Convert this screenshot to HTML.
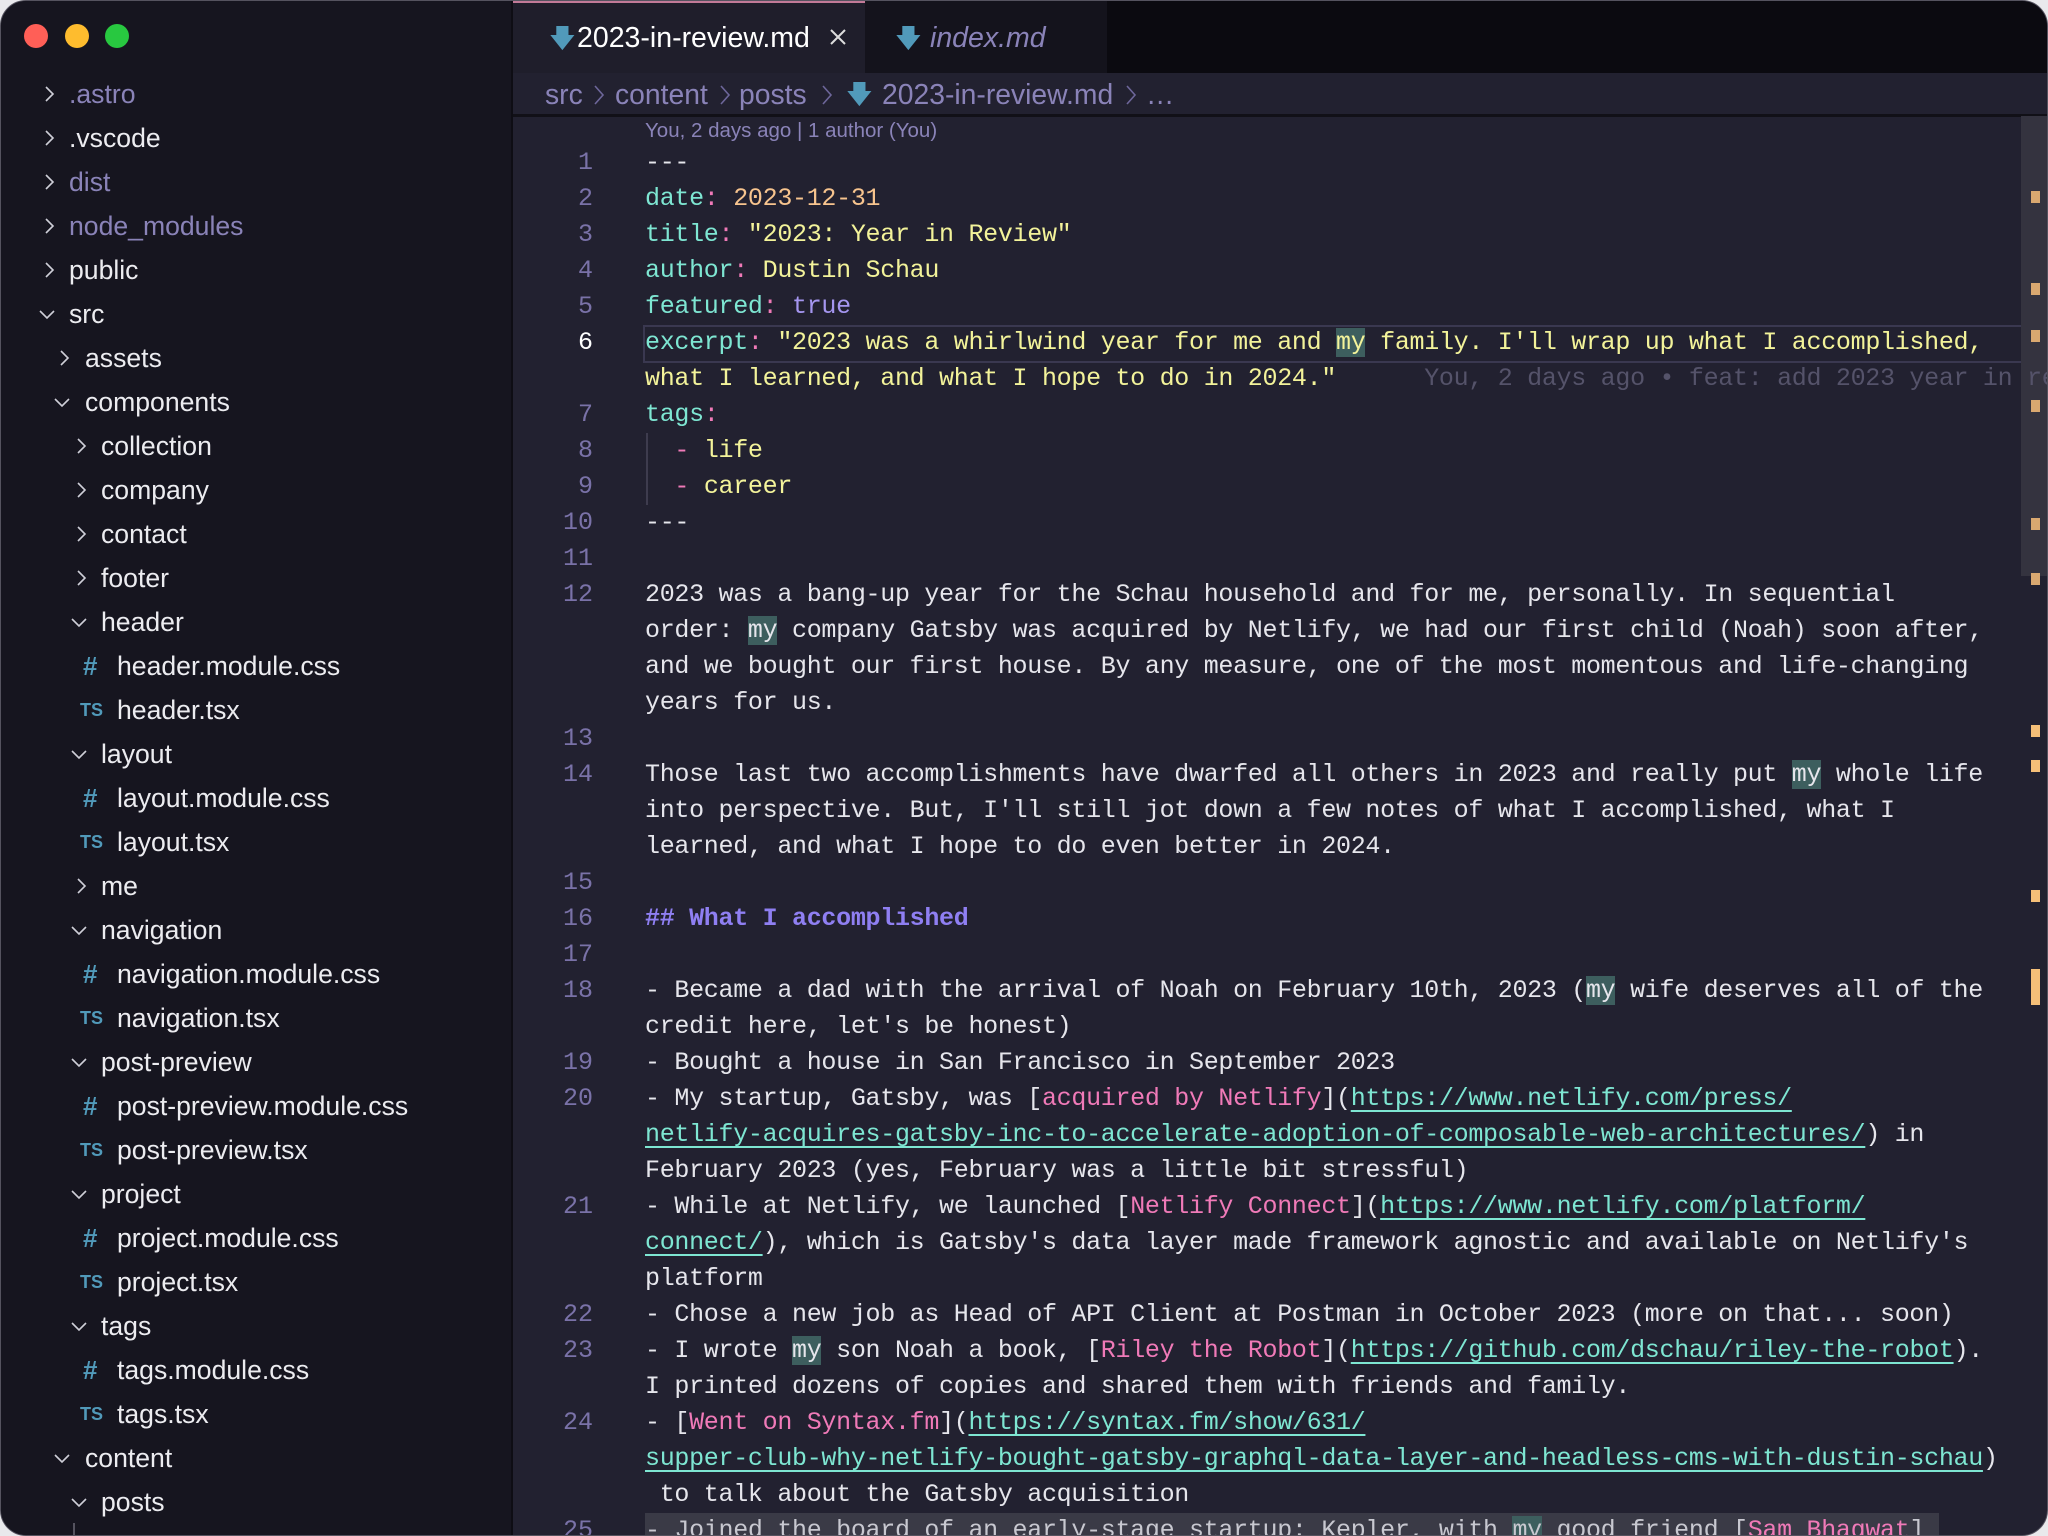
<!DOCTYPE html>
<html><head><meta charset="utf-8"><style>
*{margin:0;padding:0;box-sizing:border-box}
html,body{width:2048px;height:1536px;overflow:hidden;background:#e9e9ec}
#win{position:absolute;left:0;top:0;width:2048px;height:1536px;border-radius:26px;overflow:hidden;background:#222130;border:1px solid #55535f}
#side{position:absolute;left:0;top:0;width:512px;height:1536px;background:#16151f;border-right:2px solid #0e0d14;font-family:"Liberation Sans",sans-serif;font-size:26.6px;color:#ececf0}
.dot{position:absolute;top:23px;width:24px;height:24px;border-radius:50%}
.row{position:absolute;height:44px;line-height:44px;white-space:nowrap}
.chev{position:absolute;top:12px;width:20px;height:20px}
.dim{color:#8a83b8}
.hash{position:absolute;color:#519aba;font-weight:bold;font-size:26px}
.ts{position:absolute;color:#519aba;font-weight:bold;font-size:18px}
#tabs{position:absolute;left:512px;top:0;right:0;height:72px;background:#0b0a10}
.tab{position:absolute;top:0;height:72px;font-family:"Liberation Sans",sans-serif;font-size:28.5px;line-height:74px;white-space:nowrap}
#bc{position:absolute;left:512px;top:72px;right:0;height:44px;background:#222130;border-bottom:3px solid #111017;font-family:"Liberation Sans",sans-serif;font-size:28.3px;color:#8a83b8;line-height:42px;white-space:nowrap}
#bc span{position:absolute;top:0}
#bc svg{position:absolute;top:10px}
#code{position:absolute;left:512px;top:117px;right:0;bottom:0;font-family:"Liberation Mono",monospace;font-size:25px;letter-spacing:-0.3px;color:#e6e6ec}
.l{position:absolute;left:132px;height:36px;line-height:36px;white-space:pre}
.n{position:absolute;width:80px;left:0;text-align:right;height:36px;line-height:36px;color:#7a72a8;letter-spacing:0}
.k{color:#7ee6d2}.p{color:#f07ab8}.y{color:#f3f39a}.o{color:#f7c48e}.t{color:#a596f0}
.h{color:#8f7ff2;font-weight:bold}.lk{color:#f07ab8}.u{color:#7ee6d2;text-decoration:underline;text-decoration-thickness:2px;text-underline-offset:5px}
.m{background:#3d5e5e}
.mk{position:absolute;left:2030px;width:9px;height:12px;background:#d9a870}
</style></head><body><div id="win">
<div id="side">
<div class="dot" style="left:23px;background:#ff5f57"></div>
<div class="dot" style="left:64px;background:#febc2e"></div>
<div class="dot" style="left:104px;background:#28c840"></div>
<div class="row" style="top:71px;left:0"><svg class="chev" style="left:38px" viewBox="0 0 20 20"><polyline points="7,3 14,10 7,17" fill="none" stroke="#cfcfd8" stroke-width="1.6"/></svg><span class="dim" style="position:absolute;left:68px">.astro</span></div>
<div class="row" style="top:115px"><svg class="chev" style="left:38px" viewBox="0 0 20 20"><polyline points="7,3 14,10 7,17" fill="none" stroke="#cfcfd8" stroke-width="1.6"/></svg><span style="position:absolute;left:68px">.vscode</span></div>
<div class="row" style="top:159px"><svg class="chev" style="left:38px" viewBox="0 0 20 20"><polyline points="7,3 14,10 7,17" fill="none" stroke="#cfcfd8" stroke-width="1.6"/></svg><span class="dim" style="position:absolute;left:68px">dist</span></div>
<div class="row" style="top:203px"><svg class="chev" style="left:38px" viewBox="0 0 20 20"><polyline points="7,3 14,10 7,17" fill="none" stroke="#cfcfd8" stroke-width="1.6"/></svg><span class="dim" style="position:absolute;left:68px">node_modules</span></div>
<div class="row" style="top:247px"><svg class="chev" style="left:38px" viewBox="0 0 20 20"><polyline points="7,3 14,10 7,17" fill="none" stroke="#cfcfd8" stroke-width="1.6"/></svg><span style="position:absolute;left:68px">public</span></div>
<div class="row" style="top:291px"><svg class="chev" style="left:36px" viewBox="0 0 20 20"><polyline points="3,7 10,14 17,7" fill="none" stroke="#cfcfd8" stroke-width="1.6"/></svg><span style="position:absolute;left:68px">src</span></div>
<div class="row" style="top:335px"><svg class="chev" style="left:53px" viewBox="0 0 20 20"><polyline points="7,3 14,10 7,17" fill="none" stroke="#cfcfd8" stroke-width="1.6"/></svg><span style="position:absolute;left:84px">assets</span></div>
<div class="row" style="top:379px"><svg class="chev" style="left:51px" viewBox="0 0 20 20"><polyline points="3,7 10,14 17,7" fill="none" stroke="#cfcfd8" stroke-width="1.6"/></svg><span style="position:absolute;left:84px">components</span></div>
<div class="row" style="top:423px"><svg class="chev" style="left:70px" viewBox="0 0 20 20"><polyline points="7,3 14,10 7,17" fill="none" stroke="#cfcfd8" stroke-width="1.6"/></svg><span style="position:absolute;left:100px">collection</span></div>
<div class="row" style="top:467px"><svg class="chev" style="left:70px" viewBox="0 0 20 20"><polyline points="7,3 14,10 7,17" fill="none" stroke="#cfcfd8" stroke-width="1.6"/></svg><span style="position:absolute;left:100px">company</span></div>
<div class="row" style="top:511px"><svg class="chev" style="left:70px" viewBox="0 0 20 20"><polyline points="7,3 14,10 7,17" fill="none" stroke="#cfcfd8" stroke-width="1.6"/></svg><span style="position:absolute;left:100px">contact</span></div>
<div class="row" style="top:555px"><svg class="chev" style="left:70px" viewBox="0 0 20 20"><polyline points="7,3 14,10 7,17" fill="none" stroke="#cfcfd8" stroke-width="1.6"/></svg><span style="position:absolute;left:100px">footer</span></div>
<div class="row" style="top:599px"><svg class="chev" style="left:68px" viewBox="0 0 20 20"><polyline points="3,7 10,14 17,7" fill="none" stroke="#cfcfd8" stroke-width="1.6"/></svg><span style="position:absolute;left:100px">header</span></div>
<div class="row" style="top:643px"><span class="hash" style="left:82px">#</span><span style="position:absolute;left:116px">header.module.css</span></div>
<div class="row" style="top:687px"><span class="ts" style="left:79px">TS</span><span style="position:absolute;left:116px">header.tsx</span></div>
<div class="row" style="top:731px"><svg class="chev" style="left:68px" viewBox="0 0 20 20"><polyline points="3,7 10,14 17,7" fill="none" stroke="#cfcfd8" stroke-width="1.6"/></svg><span style="position:absolute;left:100px">layout</span></div>
<div class="row" style="top:775px"><span class="hash" style="left:82px">#</span><span style="position:absolute;left:116px">layout.module.css</span></div>
<div class="row" style="top:819px"><span class="ts" style="left:79px">TS</span><span style="position:absolute;left:116px">layout.tsx</span></div>
<div class="row" style="top:863px"><svg class="chev" style="left:70px" viewBox="0 0 20 20"><polyline points="7,3 14,10 7,17" fill="none" stroke="#cfcfd8" stroke-width="1.6"/></svg><span style="position:absolute;left:100px">me</span></div>
<div class="row" style="top:907px"><svg class="chev" style="left:68px" viewBox="0 0 20 20"><polyline points="3,7 10,14 17,7" fill="none" stroke="#cfcfd8" stroke-width="1.6"/></svg><span style="position:absolute;left:100px">navigation</span></div>
<div class="row" style="top:951px"><span class="hash" style="left:82px">#</span><span style="position:absolute;left:116px">navigation.module.css</span></div>
<div class="row" style="top:995px"><span class="ts" style="left:79px">TS</span><span style="position:absolute;left:116px">navigation.tsx</span></div>
<div class="row" style="top:1039px"><svg class="chev" style="left:68px" viewBox="0 0 20 20"><polyline points="3,7 10,14 17,7" fill="none" stroke="#cfcfd8" stroke-width="1.6"/></svg><span style="position:absolute;left:100px">post-preview</span></div>
<div class="row" style="top:1083px"><span class="hash" style="left:82px">#</span><span style="position:absolute;left:116px">post-preview.module.css</span></div>
<div class="row" style="top:1127px"><span class="ts" style="left:79px">TS</span><span style="position:absolute;left:116px">post-preview.tsx</span></div>
<div class="row" style="top:1171px"><svg class="chev" style="left:68px" viewBox="0 0 20 20"><polyline points="3,7 10,14 17,7" fill="none" stroke="#cfcfd8" stroke-width="1.6"/></svg><span style="position:absolute;left:100px">project</span></div>
<div class="row" style="top:1215px"><span class="hash" style="left:82px">#</span><span style="position:absolute;left:116px">project.module.css</span></div>
<div class="row" style="top:1259px"><span class="ts" style="left:79px">TS</span><span style="position:absolute;left:116px">project.tsx</span></div>
<div class="row" style="top:1303px"><svg class="chev" style="left:68px" viewBox="0 0 20 20"><polyline points="3,7 10,14 17,7" fill="none" stroke="#cfcfd8" stroke-width="1.6"/></svg><span style="position:absolute;left:100px">tags</span></div>
<div class="row" style="top:1347px"><span class="hash" style="left:82px">#</span><span style="position:absolute;left:116px">tags.module.css</span></div>
<div class="row" style="top:1391px"><span class="ts" style="left:79px">TS</span><span style="position:absolute;left:116px">tags.tsx</span></div>
<div class="row" style="top:1435px"><svg class="chev" style="left:51px" viewBox="0 0 20 20"><polyline points="3,7 10,14 17,7" fill="none" stroke="#cfcfd8" stroke-width="1.6"/></svg><span style="position:absolute;left:84px">content</span></div>
<div class="row" style="top:1479px"><svg class="chev" style="left:68px" viewBox="0 0 20 20"><polyline points="3,7 10,14 17,7" fill="none" stroke="#cfcfd8" stroke-width="1.6"/></svg><span style="position:absolute;left:100px">posts</span></div>
<div class="row" style="top:1523px"><span style="position:absolute;left:116px">2017-07-10.md</span></div>
<div style="position:absolute;left:72px;top:1522px;width:2px;height:20px;background:#55535f"></div>
</div>
<div id="tabs">
<div style="position:absolute;left:0;top:0;width:352px;height:72px;background:#1f1e2b;border-top:2px solid #c27a98"></div>
<div class="tab" style="left:36px;color:#519aba;font-size:26px">&#129095;</div>
<div class="tab" style="left:64px;color:#fff">2023-in-review.md</div>
<svg style="position:absolute;left:316px;top:27px" width="18" height="18" viewBox="0 0 18 18"><path d="M2 2L16 16M16 2L2 16" stroke="#ddd" stroke-width="2"/></svg>
<div style="position:absolute;left:352px;top:0;width:242px;height:72px;background:#14131c"></div>
<div class="tab" style="left:382px;color:#519aba;font-size:26px">&#129095;</div>
<div class="tab" style="left:417px;color:#8a83b8;font-style:italic">index.md</div>
</div>
<div id="bc"><span style="left:32px">src</span><svg style="left:80px" width="12" height="24" viewBox="0 0 12 24"><polyline points="2,3 10,12 2,21" fill="none" stroke="#6d669a" stroke-width="1.6"/></svg><span style="left:102px">content</span><svg style="left:206px" width="12" height="24" viewBox="0 0 12 24"><polyline points="2,3 10,12 2,21" fill="none" stroke="#6d669a" stroke-width="1.6"/></svg><span style="left:226px">posts</span><svg style="left:308px" width="12" height="24" viewBox="0 0 12 24"><polyline points="2,3 10,12 2,21" fill="none" stroke="#6d669a" stroke-width="1.6"/></svg><span style="left:333px;color:#519aba;font-size:26px">&#129095;</span><span style="left:369px">2023-in-review.md</span><svg style="left:612px" width="12" height="24" viewBox="0 0 12 24"><polyline points="2,3 10,12 2,21" fill="none" stroke="#6d669a" stroke-width="1.6"/></svg><span style="left:633px">…</span></div>
<div id="code">
<div style="position:absolute;left:132px;top:-2px;height:30px;font-family:'Liberation Sans',sans-serif;font-size:20.5px;letter-spacing:0;color:#8a83b8;line-height:30px">You, 2 days ago | 1 author (You)</div>
<div style="position:absolute;left:130px;top:207px;right:0;height:38px;border:2px solid #3a3850;border-right:none"></div>
<div style="position:absolute;left:132px;top:1395px;width:1294px;height:36px;background:#3a3a46"></div>
<div style="position:absolute;left:133px;top:315px;width:2px;height:72px;background:#3e3c4e"></div>
<div style="position:absolute;left:1508px;top:-2px;width:28px;height:460px;background:#34333f"></div>
<div class="n" style="top:27px">1</div><div class="l" style="top:27px">---</div>
<div class="n" style="top:63px">2</div><div class="l" style="top:63px"><span class="k">date</span><span class="p">:</span> <span class="o">2023-12-31</span></div>
<div class="n" style="top:99px">3</div><div class="l" style="top:99px"><span class="k">title</span><span class="p">:</span> <span class="y">"2023: Year in Review"</span></div>
<div class="n" style="top:135px">4</div><div class="l" style="top:135px"><span class="k">author</span><span class="p">:</span> <span class="y">Dustin Schau</span></div>
<div class="n" style="top:171px">5</div><div class="l" style="top:171px"><span class="k">featured</span><span class="p">:</span> <span class="t">true</span></div>
<div class="n" style="top:207px;color:#fff">6</div><div class="l" style="top:207px"><span class="k">excerpt</span><span class="p">:</span> <span class="y">"2023 was a whirlwind year for me and <span class="m">my</span> family. I'll wrap up what I accomplished,</span></div>
<div class="l" style="top:243px"><span class="y">what I learned, and what I hope to do in 2024."</span>      <span style="color:#55536a">You, 2 days ago • feat: add 2023 year in re</span></div>
<div class="n" style="top:279px">7</div><div class="l" style="top:279px"><span class="k">tags</span><span class="p">:</span></div>
<div class="n" style="top:315px">8</div><div class="l" style="top:315px">  <span class="p">-</span> <span class="y">life</span></div>
<div class="n" style="top:351px">9</div><div class="l" style="top:351px">  <span class="p">-</span> <span class="y">career</span></div>
<div class="n" style="top:387px">10</div><div class="l" style="top:387px">---</div>
<div class="n" style="top:423px">11</div>
<div class="n" style="top:459px">12</div><div class="l" style="top:459px">2023 was a bang-up year for the Schau household and for me, personally. In sequential</div>
<div class="l" style="top:495px">order: <span class="m">my</span> company Gatsby was acquired by Netlify, we had our first child (Noah) soon after,</div>
<div class="l" style="top:531px">and we bought our first house. By any measure, one of the most momentous and life-changing</div>
<div class="l" style="top:567px">years for us.</div>
<div class="n" style="top:603px">13</div>
<div class="n" style="top:639px">14</div><div class="l" style="top:639px">Those last two accomplishments have dwarfed all others in 2023 and really put <span class="m">my</span> whole life</div>
<div class="l" style="top:675px">into perspective. But, I'll still jot down a few notes of what I accomplished, what I</div>
<div class="l" style="top:711px">learned, and what I hope to do even better in 2024.</div>
<div class="n" style="top:747px">15</div>
<div class="n" style="top:783px">16</div><div class="l h" style="top:783px">## What I accomplished</div>
<div class="n" style="top:819px">17</div>
<div class="n" style="top:855px">18</div><div class="l" style="top:855px">- Became a dad with the arrival of Noah on February 10th, 2023 (<span class="m">my</span> wife deserves all of the</div>
<div class="l" style="top:891px">credit here, let's be honest)</div>
<div class="n" style="top:927px">19</div><div class="l" style="top:927px">- Bought a house in San Francisco in September 2023</div>
<div class="n" style="top:963px">20</div><div class="l" style="top:963px">- My startup, Gatsby, was [<span class="lk">acquired by Netlify</span>](<span class="u">https://www.netlify.com/press/</span></div>
<div class="l" style="top:999px"><span class="u">netlify-acquires-gatsby-inc-to-accelerate-adoption-of-composable-web-architectures/</span>) in</div>
<div class="l" style="top:1035px">February 2023 (yes, February was a little bit stressful)</div>
<div class="n" style="top:1071px">21</div><div class="l" style="top:1071px">- While at Netlify, we launched [<span class="lk">Netlify Connect</span>](<span class="u">https://www.netlify.com/platform/</span></div>
<div class="l" style="top:1107px"><span class="u">connect/</span>), which is Gatsby's data layer made framework agnostic and available on Netlify's</div>
<div class="l" style="top:1143px">platform</div>
<div class="n" style="top:1179px">22</div><div class="l" style="top:1179px">- Chose a new job as Head of API Client at Postman in October 2023 (more on that... soon)</div>
<div class="n" style="top:1215px">23</div><div class="l" style="top:1215px">- I wrote <span class="m">my</span> son Noah a book, [<span class="lk">Riley the Robot</span>](<span class="u">https://github.com/dschau/riley-the-robot</span>).</div>
<div class="l" style="top:1251px">I printed dozens of copies and shared them with friends and family.</div>
<div class="n" style="top:1287px">24</div><div class="l" style="top:1287px">- [<span class="lk">Went on Syntax.fm</span>](<span class="u">https://syntax.fm/show/631/</span></div>
<div class="l" style="top:1323px"><span class="u">supper-club-why-netlify-bought-gatsby-graphql-data-layer-and-headless-cms-with-dustin-schau</span>)</div>
<div class="l" style="top:1359px"> to talk about the Gatsby acquisition</div>
<div class="n" style="top:1395px">25</div><div class="l" style="top:1395px;color:#c8c8d0">- Joined the board of an early-stage startup: Kepler, with <span class="m">my</span> good friend [<span class="lk">Sam Bhagwat</span>]</div>
</div>
<div class="mk" style="top:190px"></div><div class="mk" style="top:282px"></div><div class="mk" style="top:329px"></div><div class="mk" style="top:399px"></div><div class="mk" style="top:517px"></div><div class="mk" style="top:572px"></div><div class="mk" style="top:724px;background:#f5bf78"></div><div class="mk" style="top:759px;background:#f5bf78"></div><div class="mk" style="top:889px;background:#f5bf78"></div><div class="mk" style="top:968px;height:36px;background:#f5bf78"></div>
</div></body></html>
